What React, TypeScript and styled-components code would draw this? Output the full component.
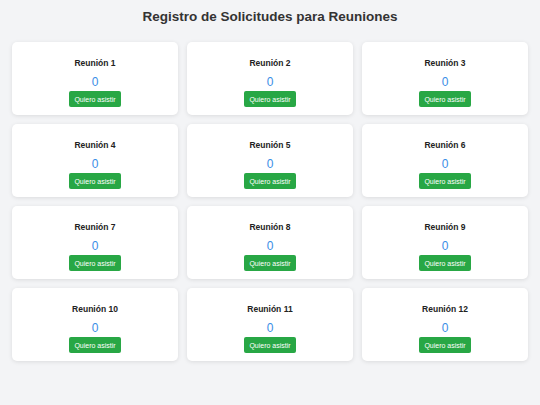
import React, { useState } from 'react';
import styled, { createGlobalStyle } from 'styled-components';

const GlobalStyle = createGlobalStyle`
  html, body {
    margin: 0;
    padding: 0;
    background: #f3f4f6;
    font-family: "Liberation Sans", Arial, sans-serif;
  }
`;

const Page = styled.div`
  padding: 8px 12px 12px;
`;

const Title = styled.h1`
  margin: 0 0 16px;
  text-align: center;
  font-size: 13.5px;
  font-weight: bold;
  color: #333;
  line-height: 18px;
`;

const Grid = styled.div`
  display: grid;
  grid-template-columns: repeat(3, 1fr);
  gap: 9px;
`;

const Card = styled.div`
  background: #fff;
  border-radius: 5px;
  box-shadow: 0 1px 4px rgba(0, 0, 0, 0.1);
  height: 73px;
  display: flex;
  flex-direction: column;
  align-items: center;
  padding-top: 16px;
  box-sizing: border-box;
`;

const Name = styled.h2`
  margin: 0;
  font-size: 8.5px;
  font-weight: bold;
  color: #222;
  line-height: 10px;
`;

const Count = styled.div`
  margin-top: 7px;
  font-size: 12px;
  color: #3a8ee6;
  line-height: 14px;
`;

const Button = styled.button`
  margin-top: 2px;
  background: #28a745;
  color: #fff;
  border: none;
  border-radius: 2px;
  font-family: inherit;
  font-size: 7px;
  height: 16px;
  padding: 0 5px;
  cursor: pointer;
`;

export default function App() {
  const [counts, setCounts] = useState<number[]>(Array(12).fill(0));

  return (
    <>
      <GlobalStyle />
      <Page>
        <Title>Registro de Solicitudes para Reuniones</Title>
        <Grid>
          {counts.map((c, i) => (
            <Card key={i}>
              <Name>Reunión {i + 1}</Name>
              <Count>{c}</Count>
              <Button
                onClick={() =>
                  setCounts((prev) => prev.map((v, j) => (j === i ? v + 1 : v)))
                }
              >
                Quiero asistir
              </Button>
            </Card>
          ))}
        </Grid>
      </Page>
    </>
  );
}
